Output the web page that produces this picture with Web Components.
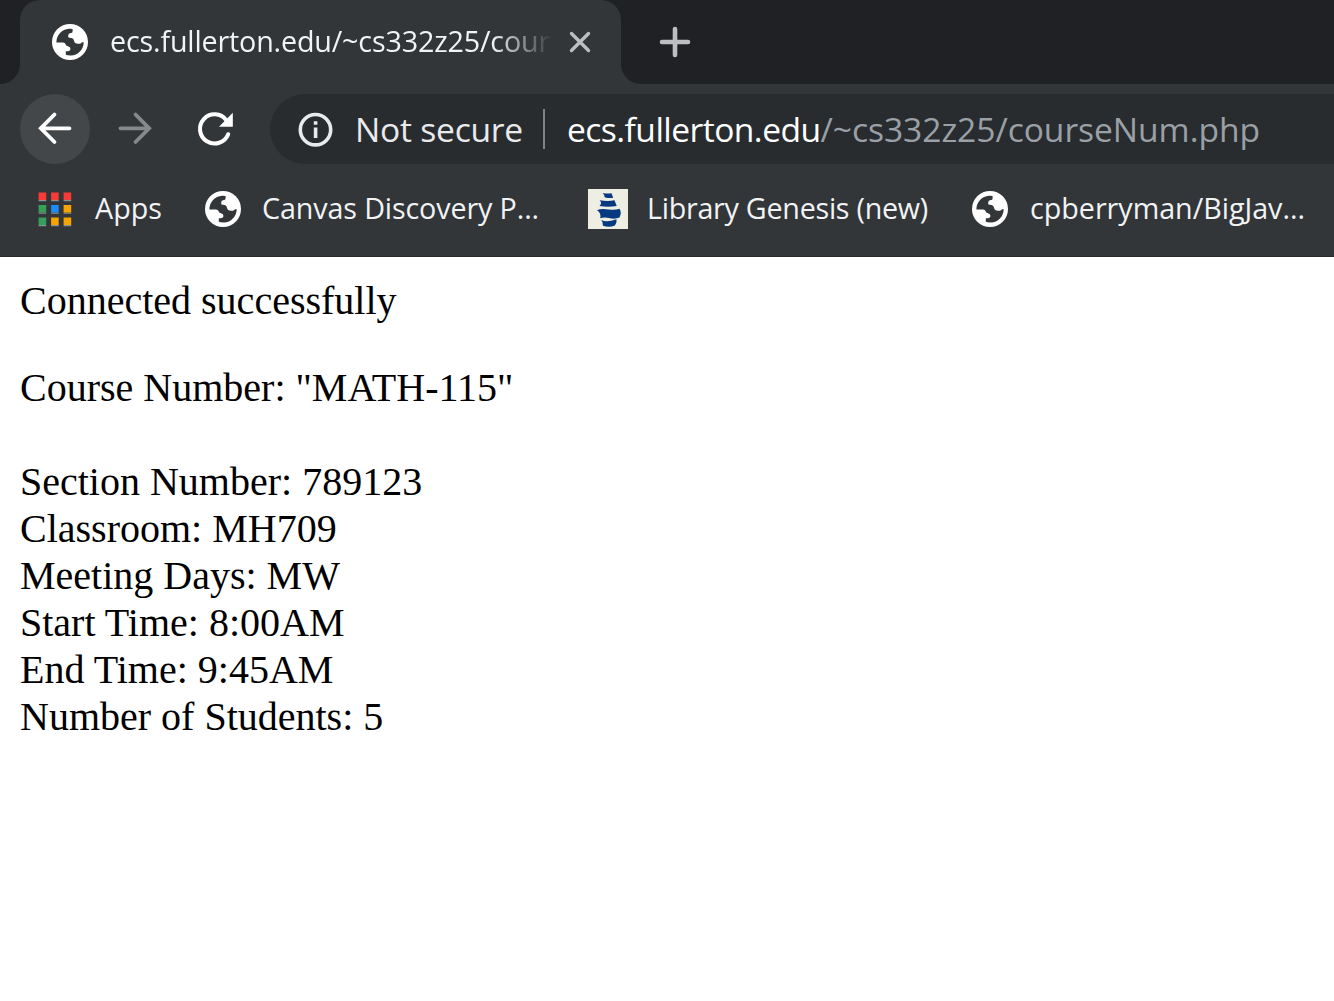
<!DOCTYPE html>
<html lang="en">
<head>
<meta charset="utf-8">
<title>ecs.fullerton.edu/~cs332z25/courseNum.php</title>
<style>
html,body{margin:0;height:100%;overflow:hidden;background:#fff}
</style>
</head>
<body>
<browser-window></browser-window>
<script>
const define=(name,html,ready)=>customElements.define(name,class extends HTMLElement{
  connectedCallback(){
    if(this.shadowRoot)return;
    this.attachShadow({mode:'open'}).innerHTML=html;
    if(ready)ready(this);
  }
});

/* Single-line label: tracking is adjusted so the text fills the "w" attribute in pixels. */
define('ui-label',`<style>
:host{display:block;flex:none;white-space:nowrap;font-family:"Open Sans","Noto Sans",sans-serif;line-height:40px}
span{display:inline-block}
</style><span><slot></slot></span>`,el=>{
  const w=+el.getAttribute('w'),span=el.shadowRoot.querySelector('span');
  el.style.width=w+'px';
  const fit=()=>{
    span.style.letterSpacing='0';
    span.style.letterSpacing=(w-span.getBoundingClientRect().width)/el.textContent.length+'px';
  };
  requestAnimationFrame(fit);
  setTimeout(fit,0);
});

define('globe-icon',`<style>:host{display:block;flex:none;width:36px;height:36px}svg{display:block}</style>
<svg width="36" height="36" viewBox="-18 -18 36 36"><circle r="18" fill="#fff"/>
<path fill="#323639" d="M-13.6 .4C-13.6-7-8-12.8-1-13.2Q1-13.3 2.6-13V-10.6Q2.6-9 .8-9Q-1.8-8.8-1.8-6.6V-5.4Q-1.8-4.2-.4-4.2Q3.6-4.2 4-1.2Q4.4 1.8 8 1.8Q11.4 1.8 11.8 .2H13.7C13.5 7.6 8 13.4 1 13.4Q-2 13.5-4.2 12.7V9.2H-2.2Q.4 9.2 .4 6.8Q.4 4.8-1.6 4.4Q-4.4 4-4.6 2Q-4.8 .4-7 .4Z"/></svg>`);

define('apps-icon',`<style>:host{display:block;flex:none;width:34px;height:35px}svg{display:block}</style>
<svg width="34" height="35" viewBox="0 0 34 35">
<path fill="#8c8f91" d="M.6 8h7.6v1.2H.6zm12.5 0h7.6v1.2h-7.6zm12.5 0h7.6v1.2h-7.6zM.6 20.5h7.6v1.2H.6zm12.5 0h7.6v1.2h-7.6zm12.5 0h7.6v1.2h-7.6zM.6 33h7.6v1.2H.6zm12.5 0h7.6v1.2h-7.6zm12.5 0h7.6v1.2h-7.6z"/>
<path fill="#f93a37" d="M.6.5h7.6V8H.6zm12.5 0h7.6V8h-7.6zm12.5 0h7.6V8h-7.6z"/>
<path fill="#34a05a" d="M.6 13h7.6v7.5H.6zm0 12.5h7.6V33H.6z"/><path fill="#1e8cf8" d="M13.1 13h7.6v7.5h-7.6z"/>
<path fill="#f5a400" d="M25.6 13h7.6v7.5h-7.6zM13.1 25.5h7.6V33h-7.6zm12.5 0h7.6V33h-7.6z"/></svg>`);

define('ship-icon',`<style>:host{display:block;flex:none;width:40px;height:40px}svg{display:block}</style>
<svg width="40" height="40" viewBox="0 0 40 40"><path fill="#efeee2" d="M0 0h40v40H0z"/><g fill="#073980">
<path d="M14.5 4Q19 5 23.5 4.3L25.2 8.8Q21 9.5 16.6 8.2Q17 6 14.5 4Z"/>
<path d="M11.7 11.2Q20 12.7 26.5 11.2L28.7 17Q20 18.5 11.5 17Q14.5 14 11.7 11.2Z"/>
<path d="M9 21.2Q13 19 21 20.5Q27 21.3 31.5 19.8Q34 23.5 31.5 28.5Q27 30.5 21 29Q16 28 12.2 29.2Q13.5 24 9 21.2Z"/>
<path d="M13.2 31Q19 34 28.3 30.2Q29.3 33 26.8 36.5Q21 39 15 36.7Q15.2 33 13.2 31Z"/></g></svg>`);

define('tab-strip',`<style>
:host{display:flex;height:84px;background:#323639}
.edge{background:#202124;width:20px;border-radius:0 0 20px 0}
.slot{width:600.5px;background:linear-gradient(#202124 50%,#323639 50%)}
.tab{box-sizing:border-box;height:84px;background:#323639;border-radius:20px 20px 0 0;display:flex;align-items:center;padding-left:32px}
.title{width:442px;margin-left:22px;padding-bottom:2px;font-size:28.7px;color:#f1f3f4;-webkit-mask-image:linear-gradient(90deg,#000 382px,transparent 443px);mask-image:linear-gradient(90deg,#000 382px,transparent 443px)}
.rest{flex:1;background:#202124;border-radius:0 0 0 20px;display:flex;align-items:center;padding-left:38.5px}
svg{display:block;flex:none}.close{margin-left:16px}
</style>
<div class="edge"></div>
<div class="slot"><div class="tab"><globe-icon></globe-icon>
<div class="title"><ui-label w="440">ecs.fullerton.edu/~cs332z25/cour</ui-label></div>
<svg class="close" width="24" height="24" viewBox="0 0 24 24"><path d="M3.5 3.5 20.5 20.5M20.5 3.5 3.5 20.5" stroke="#bcbec0" stroke-width="3.4" stroke-linecap="round"/></svg>
</div></div>
<div class="rest"><svg width="32" height="32" viewBox="0 0 32 32"><path d="M16 3V29M3 16H29" stroke="#bdbec1" stroke-width="4.6" stroke-linecap="round"/></svg></div>`);

define('nav-bar',`<style>
:host{display:flex;align-items:center;height:70px;padding:10px 0 10px 20px;background:#323639}
.btn{width:70px;height:70px;margin-right:10px;border-radius:50%;flex:none}.on{background:#444749}
.btn svg{display:block}
.box{flex:1;margin-left:10px;height:70px;background:#282c2f;border-radius:35px 0 0 35px;display:flex;align-items:center;padding-left:28px;font-size:33.6px;color:#e8eaed;overflow:hidden}
.box>svg{flex:none;margin-right:22px}
.bar{width:2px;height:40px;background:#808386;margin:0 22px 0 20px;flex:none}
.host{color:#fff}.path{color:#9aa0a6}
</style>
<div class="btn on"><svg width="70" height="70" fill="none" stroke="#fff" stroke-width="3.8" stroke-linecap="round"><path d="M49.5 34.3H21M34.5 20.5 20.8 34.3 34.5 48"/></svg></div>
<div class="btn"><svg width="70" height="70" fill="none" stroke="#86888a" stroke-width="3.8" stroke-linecap="round"><path d="M20.5 34.3H49M35.5 20.5 49.2 34.3 35.5 48"/></svg></div>
<div class="btn"><svg width="70" height="70" fill="none"><path d="M48.2 40.2A14.6 14.6 0 1 1 46.3 26.2" stroke="#fff" stroke-width="4" stroke-linecap="round"/><path d="M52.8 18.8V32.8H39Z" fill="#fff"/></svg></div>
<div class="box">
<svg width="35" height="35" viewBox="0 0 35 35"><circle cx="17.5" cy="17.7" r="15.2" fill="none" stroke="#e8eaed" stroke-width="3.6"/><path fill="#e8eaed" d="M15.8 9.2h3.6v3.5h-3.6zM15.8 15.6h3.6v10.5h-3.6z"/></svg>
<ui-label w="168">Not secure</ui-label><div class="bar"></div>
<ui-label class="host" w="253.5">ecs.fullerton.edu</ui-label><ui-label class="path" w="439.5">/~cs332z25/courseNum.php</ui-label>
</div>`);

define('bookmark-bar',`<style>
:host{display:flex;align-items:flex-start;box-sizing:border-box;height:83px;padding-left:38px;background:#323639;border-bottom:1px solid #27292b;font-size:28.7px;color:#f1f3f4}
.item{display:flex;align-items:center;height:70px}
.item ui-label{padding-bottom:2px}
</style>
<div class="item" style="gap:23px;margin-right:43px"><apps-icon></apps-icon><ui-label w="67">Apps</ui-label></div>
<div class="item" style="gap:21px;margin-right:49px"><globe-icon></globe-icon><ui-label w="277">Canvas Discovery P...</ui-label></div>
<div class="item" style="gap:19px;margin-right:44px"><ship-icon></ship-icon><ui-label w="281">Library Genesis (new)</ui-label></div>
<div class="item" style="gap:22px"><globe-icon></globe-icon><ui-label w="275">cpberryman/BigJav...</ui-label></div>`);

define('page-content',`<style>
:host{display:block;padding:20px;font:40px/47px "Liberation Serif","Times New Roman",serif;color:#000}
div.gap{margin-top:40px}div.sec{margin-top:47px}
</style>
<div>Connected successfully</div>
<div class="gap">Course Number: "MATH-115"</div>
<div class="sec"><div>Section Number: 789123</div><div>Classroom: MH709</div><div>Meeting Days: MW</div><div>Start Time: 8:00AM</div><div>End Time: 9:45AM</div><div>Number of Students: 5</div></div>`);

define('browser-window',`<style>:host{display:flex;flex-direction:column;width:1334px;height:1001px;overflow:hidden;background:#fff}</style>
<tab-strip></tab-strip><nav-bar></nav-bar><bookmark-bar></bookmark-bar><page-content></page-content>`);
</script>
</body>
</html>
